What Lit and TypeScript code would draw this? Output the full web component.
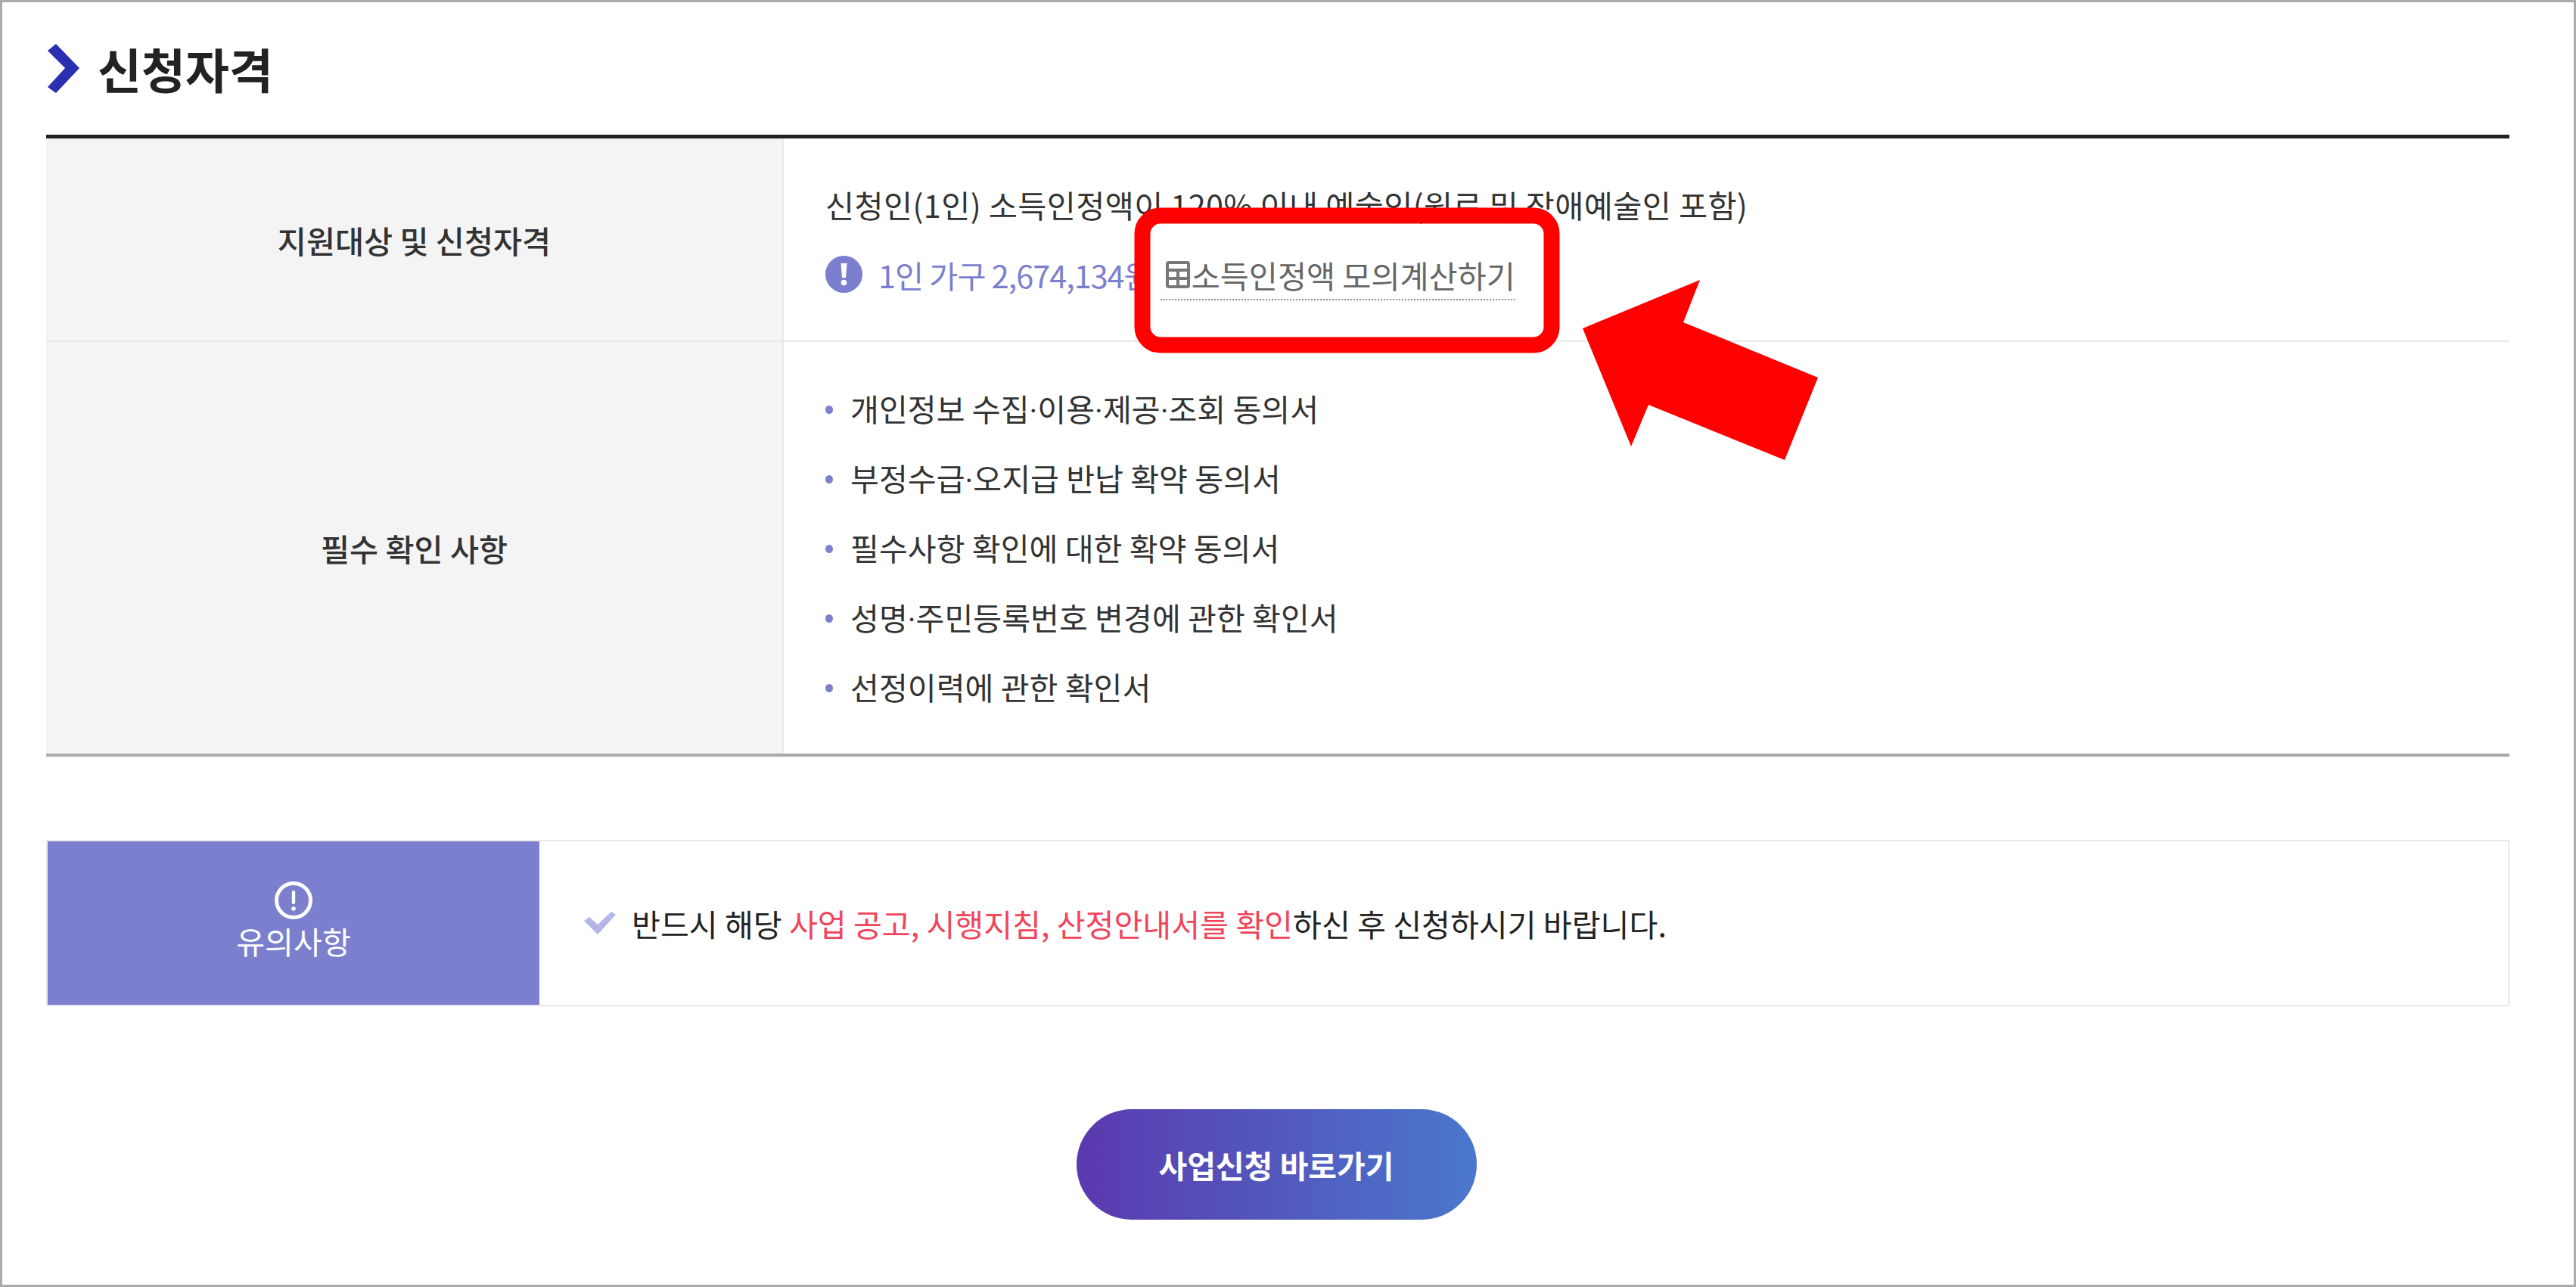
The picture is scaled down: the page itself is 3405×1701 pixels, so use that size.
import { LitElement, html, css, svg } from "lit";
import { customElement } from "lit/decorators.js";

const ITEMS = [
  "개인정보 수집·이용·제공·조회 동의서",
  "부정수급·오지급 반납 확약 동의서",
  "필수사항 확인에 대한 확약 동의서",
  "성명·주민등록번호 변경에 관한 확인서",
  "선정이력에 관한 확인서",
];

@customElement("app-root")
export class AppRoot extends LitElement {
  static styles = css`
    :host {
      display: block;
      font-family: "Noto Sans CJK KR", "Noto Sans", sans-serif;
      color: #333;
    }
    .frame {
      position: relative;
      box-sizing: border-box;
      width: 3405px;
      height: 1701px;
      border: 3px solid #aaa;
      background: #fff;
      padding: 0 85px 0 58px;
      overflow: hidden;
    }
    .title {
      height: 175px;
      display: flex;
      align-items: flex-start;
      gap: 24px;
      padding-top: 55px;
      box-sizing: border-box;
    }
    .title svg { display: block; }
    .title h2 {
      margin: -3px 0 0;
      font-size: 63px;
      line-height: 70px;
      font-weight: 700;
      color: #222;
    }
    .table {
      border-top: 5px solid #222;
      border-bottom: 4px solid #aaa;
      display: grid;
      grid-template-columns: 975px 1fr;
      grid-template-rows: 269px 544px;
    }
    .th {
      background: #f4f4f4;
      border-right: 2px solid #e8e8e8;
      display: flex;
      align-items: center;
      justify-content: center;
      font-size: 41.4px;
      font-weight: 500;
      color: #333;
    }
    .td {
      padding-left: 55px;
      font-size: 41.2px;
      color: #333;
    }
    .line { border-bottom: 2px solid #e8e8e8; }
    .first { padding-top: 58px; box-sizing: border-box; font-size: 41.4px; }
    .l1 { line-height: 58px; letter-spacing: 0.4px; }
    .l2 {
      margin-top: 36px;
      display: flex;
      align-items: flex-start;
      line-height: 56px;
    }
    .l2 > svg { margin-top: 3px; }
    .amount {
      color: #7b7fce;
      margin-left: 21px;
      letter-spacing: -1px;
      white-space: nowrap;
      flex: none;
    }
    .calc {
      margin-left: 11px;
      color: #666;
      display: flex;
      align-items: center;
      gap: 2px;
      padding: 0 0 4px 7px;
      border-bottom: 2px dotted #888;
      white-space: nowrap;
    }
    ul {
      list-style: none;
      margin: 0;
      padding: 5px 0 0;
      box-sizing: border-box;
      display: flex;
      flex-direction: column;
      height: 100%;
      justify-content: center;
      gap: 34px;
    }
    li {
      font-family: Roboto, "Noto Sans CJK KR", sans-serif;
      word-spacing: -1px;
      line-height: 58px;
      position: relative;
      padding-left: 33px;
    }
    li::before {
      content: "";
      position: absolute;
      left: 0;
      top: 22px;
      width: 10px;
      height: 11px;
      border-radius: 50%;
      background: #7b7fce;
    }
    .notice {
      margin-top: 110px;
      height: 220px;
      box-sizing: border-box;
      border: 2px solid #e8e8e8;
      display: flex;
    }
    .badge {
      width: 650px;
      background: #7b7fce;
      color: #fff;
      display: flex;
      flex-direction: column;
      align-items: center;
      justify-content: center;
      box-sizing: border-box;
      padding-bottom: 5px;
      font-size: 41.2px;
      line-height: 56px;
    }
    .msg {
      display: flex;
      align-items: center;
      padding-left: 59px;
      gap: 21px;
      font-size: 41.2px;
      color: #222;
    }
    .msg em { font-style: normal; color: #f1435a; }
    .btn-row {
      margin-top: 136px;
      padding-right: 4px;
      display: flex;
      justify-content: center;
    }
    .btn {
      width: 529px;
      height: 146px;
      border-radius: 73px;
      background: linear-gradient(90deg, #5b39ae, #4a78cc);
      color: #fff;
      font-size: 41px;
      font-weight: 700;
      display: flex;
      align-items: center;
      justify-content: center;
    }
    .overlay {
      position: absolute;
      left: 0;
      top: 0;
      pointer-events: none;
    }
  `;

  render() {
    return html`
      <div class="frame">
        <div class="title">
          <svg width="44" height="66" viewBox="0 0 44 66">
            <polygon points="2,9 13,0 44,32 13,65 2,57 25,32" fill="#2a2fb0"></polygon>
          </svg>
          <h2>신청자격</h2>
        </div>
        <div class="table">
          <div class="th line">지원대상 및 신청자격</div>
          <div class="td line first">
            <div class="l1">신청인(1인) 소득인정액이 120% 이내 예술인(원로 및 장애예술인 포함)</div>
            <div class="l2">
              <svg width="49" height="49" viewBox="0 0 49 49">
                <circle cx="24.5" cy="24.5" r="24.5" fill="#7b7fce"></circle>
                <path d="M20.5 10H28.5L27 29H22Z" fill="#fff"></path>
                <circle cx="24.5" cy="35.5" r="3.8" fill="#fff"></circle>
              </svg>
              <span class="amount">1인 가구 2,674,134원</span>
              <span class="calc">
                <svg width="32" height="36" viewBox="0 0 32 36" fill="none" stroke="#777" stroke-width="4">
                  <rect x="2" y="2" width="28" height="32" rx="2"></rect>
                  <path d="M2 12H30M2 23H30M16 12V34"></path>
                </svg>
                소득인정액 모의계산하기
              </span>
            </div>
          </div>
          <div class="th">필수 확인 사항</div>
          <div class="td">
            <ul>${ITEMS.map((t) => html`<li>${t}</li>`)}</ul>
          </div>
        </div>
        <div class="notice">
          <div class="badge">
            <svg width="50" height="50" viewBox="0 0 50 50">
              <circle cx="25" cy="25" r="22.5" fill="none" stroke="#fff" stroke-width="5"></circle>
              <rect x="22.8" y="12" width="4.4" height="18" rx="2" fill="#fff"></rect>
              <circle cx="25" cy="36" r="2.8" fill="#fff"></circle>
            </svg>
            유의사항
          </div>
          <div class="msg">
            <svg width="42" height="30" viewBox="0 0 42 30">
              <polygon points="0,12 7,7 18,17 36,0 42,4 18,30" fill="#b3b6e6"></polygon>
            </svg>
            <span>반드시 해당 <em>사업 공고, 시행지침, 산정안내서를 확인</em>하신 후 신청하시기 바랍니다.</span>
          </div>
        </div>
        <div class="btn-row"><div class="btn">사업신청 바로가기</div></div>
        <svg class="overlay" width="3405" height="1701" viewBox="3 3 3405 1701">
          ${svg`<rect x="1510" y="285" width="541" height="171" rx="24" fill="none" stroke="#f00" stroke-width="21"></rect>
          <polygon points="2092,434 2247,370 2225,426 2403,499 2359,608 2179,535 2156,590" fill="#f00"></polygon>`}
        </svg>
      </div>
    `;
  }
}
